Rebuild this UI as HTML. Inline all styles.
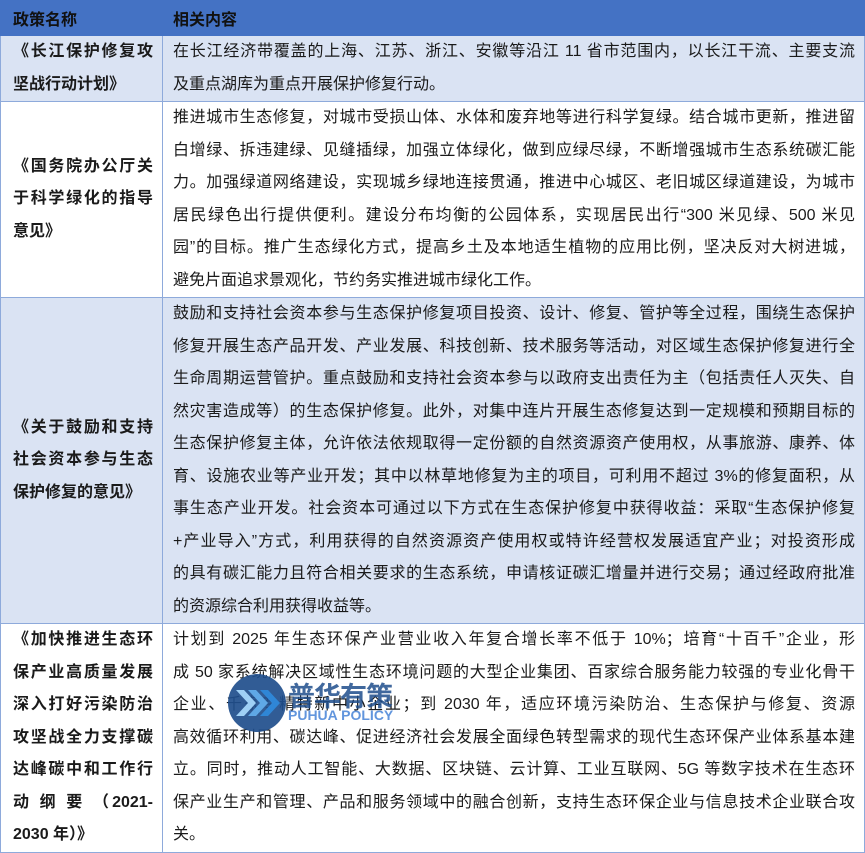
<!DOCTYPE html>
<html><head><meta charset="utf-8"><style>
*{margin:0;padding:0;box-sizing:border-box}
body{width:865px;height:853px;overflow:hidden;background:#fff;font-family:"Liberation Sans","Noto Sans CJK SC",sans-serif;font-size:16px;color:#1a1a1a}
table{border-collapse:collapse;width:865px;table-layout:fixed}
td{border:1px solid #8eaadb;vertical-align:middle}
td.l{width:162px;padding:0 9px 0 12px;font-weight:bold}
td.r{padding:0 9px 0 10px}
.h td{background:#4472c4;height:35px;font-weight:bold;color:#111;border-color:#4472c4}
.a td{background:#dae3f3}
.ln{display:block;text-align:justify;text-align-last:justify;white-space:nowrap;height:32.5px;line-height:32.5px}
.ln.e{text-align-last:left}
.logo{position:absolute;left:228px;top:674px;width:58px;height:58px}
.lt{position:absolute;left:288px;top:675px;color:#1f4e8c;font-weight:bold;font-size:27px;opacity:.85;letter-spacing:-1px}
.ls{position:absolute;left:288px;top:707px;color:#3a7bd5;font-weight:bold;font-size:14px;opacity:.8}
</style></head><body>
<table>
<tr class="h"><td class="l">政策名称</td><td class="r" style="font-weight:bold">相关内容</td></tr>
<tr class="a"><td class="l"><span class="ln">《长江保护修复攻</span><span class="ln e">坚战行动计划》</span></td>
<td class="r"><span class="ln">在长江经济带覆盖的上海、江苏、浙江、安徽等沿江 11 省市范围内，以长江干流、主要支流</span><span class="ln e">及重点湖库为重点开展保护修复行动。</span></td></tr>
<tr><td class="l"><span class="ln">《国务院办公厅关</span><span class="ln">于科学绿化的指导</span><span class="ln e">意见》</span></td>
<td class="r"><span class="ln">推进城市生态修复，对城市受损山体、水体和废弃地等进行科学复绿。结合城市更新，推进留</span><span class="ln">白增绿、拆违建绿、见缝插绿，加强立体绿化，做到应绿尽绿，不断增强城市生态系统碳汇能</span><span class="ln">力。加强绿道网络建设，实现城乡绿地连接贯通，推进中心城区、老旧城区绿道建设，为城市</span><span class="ln">居民绿色出行提供便利。建设分布均衡的公园体系，实现居民出行“300 米见绿、500 米见</span><span class="ln">园”的目标。推广生态绿化方式，提高乡土及本地适生植物的应用比例，坚决反对大树进城，</span><span class="ln e">避免片面追求景观化，节约务实推进城市绿化工作。</span></td></tr>
<tr class="a"><td class="l"><span class="ln">《关于鼓励和支持</span><span class="ln">社会资本参与生态</span><span class="ln e">保护修复的意见》</span></td>
<td class="r"><span class="ln">鼓励和支持社会资本参与生态保护修复项目投资、设计、修复、管护等全过程，围绕生态保护</span><span class="ln">修复开展生态产品开发、产业发展、科技创新、技术服务等活动，对区域生态保护修复进行全</span><span class="ln">生命周期运营管护。重点鼓励和支持社会资本参与以政府支出责任为主（包括责任人灭失、自</span><span class="ln">然灾害造成等）的生态保护修复。此外，对集中连片开展生态修复达到一定规模和预期目标的</span><span class="ln">生态保护修复主体，允许依法依规取得一定份额的自然资源资产使用权，从事旅游、康养、体</span><span class="ln">育、设施农业等产业开发；其中以林草地修复为主的项目，可利用不超过 3%的修复面积，从</span><span class="ln">事生态产业开发。社会资本可通过以下方式在生态保护修复中获得收益：采取“生态保护修复</span><span class="ln">+产业导入”方式，利用获得的自然资源资产使用权或特许经营权发展适宜产业；对投资形成</span><span class="ln">的具有碳汇能力且符合相关要求的生态系统，申请核证碳汇增量并进行交易；通过经政府批准</span><span class="ln e">的资源综合利用获得收益等。</span></td></tr>
<tr><td class="l"><span class="ln">《加快推进生态环</span><span class="ln">保产业高质量发展</span><span class="ln">深入打好污染防治</span><span class="ln">攻坚战全力支撑碳</span><span class="ln">达峰碳中和工作行</span><span class="ln">动 纲 要 （2021-</span><span class="ln e">2030 年）》</span></td>
<td class="r"><span class="ln">计划到 2025 年生态环保产业营业收入年复合增长率不低于 10%；培育“十百千”企业，形</span><span class="ln">成 50 家系统解决区域性生态环境问题的大型企业集团、百家综合服务能力较强的专业化骨干</span><span class="ln">企业、千家专精特新中小企业；到 2030 年，适应环境污染防治、生态保护与修复、资源</span><span class="ln">高效循环利用、碳达峰、促进经济社会发展全面绿色转型需求的现代生态环保产业体系基本建</span><span class="ln">立。同时，推动人工智能、大数据、区块链、云计算、工业互联网、5G 等数字技术在生态环</span><span class="ln">保产业生产和管理、产品和服务领域中的融合创新，支持生态环保企业与信息技术企业联合攻</span><span class="ln e">关。</span></td></tr>
</table>
<svg class="logo" viewBox="0 0 58 58"><circle cx="29" cy="29" r="29" fill="#1f4e8c" opacity=".92"/>
<path d="M8 16h8l12 13-12 13H8l12-13z" fill="#9fd0f5"/>
<path d="M20 16h8l12 13-12 13h-8l12-13z" fill="#5fa8e6"/>
<path d="M32 16h8l12 13-12 13h-8l12-13z" fill="#2f86d6"/></svg>
<div class="lt">普华有策</div><div class="ls">PUHUA POLICY</div>
</body></html>
